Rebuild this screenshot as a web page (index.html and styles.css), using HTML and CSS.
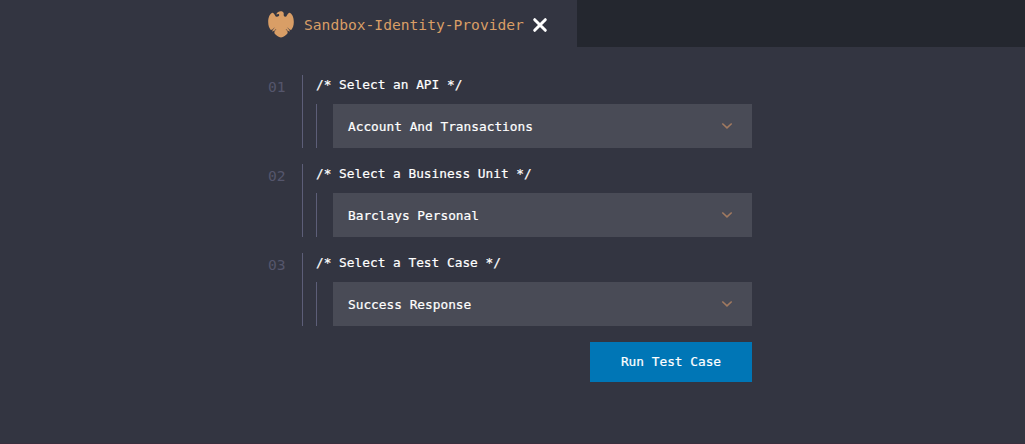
FILE: index.html
```html
<!DOCTYPE html>
<html lang="en">
<head>
<meta charset="utf-8">
<title>Sandbox-Identity-Provider</title>
<link rel="stylesheet" href="styles.css">
</head>
<body>
<header class="tabs">
  <div class="tab">
    <svg class="eagle" width="26" height="27" viewBox="0 0 26 27" aria-hidden="true">
      <path fill="#d99e66" d="M10.2 1C11 .2 12.3 0 13.6.2C15.3.5 16.1 2 15.7 3.6C15.6 5 16.2 6 17.5 5.8C19.2 5.4 19 2.4 21.6 1.7C24.3 2.6 25.8 6.6 25.8 11C25.8 14.5 24.8 17.3 23 19.2L21.5 18L21.6 20.8L19.6 19.6L19.6 22.2C18 24.4 15.5 26 13 26.4C10.5 26 8 24.4 6.4 22.2L6.4 19.6L4.4 20.8L4.5 18L3 19.2C1.2 17.3.2 14.5.2 11C.2 6.6 1.7 2.6 4.4 1.7C7 2.4 6.8 5.4 8.5 5.8C10.3 6 11.6 5 11.1 3.6C10.5 2.9 9.5 3 8.5 3.7C8.5 2.3 9.2 1.5 10.2 1Z"/>
      <path fill="none" stroke="#333440" stroke-width=".5" d="M4 19.5L6.3 16.7M6 20.8L8 18M22 19.5L19.7 16.7M20 20.8L18 18"/>
    </svg>
    <span class="tab-title">Sandbox-Identity-Provider</span>
    <svg class="close" width="16" height="16" viewBox="0 0 16 16" aria-label="Close"><path d="M2.7 2.7L13.3 13.3M13.3 2.7L2.7 13.3"/></svg>
  </div>
</header>
<main class="form">
  <section class="step">
    <span class="number">01</span>
    <div class="step-body">
      <div class="label">/* Select an API */</div>
      <div class="field"><div class="select"><span>Account And Transactions</span><svg class="chevron" width="12" height="8" viewBox="0 0 12 8"><path d="M1.3 1.5L6 5.8L10.7 1.5"/></svg></div></div>
    </div>
  </section>
  <section class="step">
    <span class="number">02</span>
    <div class="step-body">
      <div class="label">/* Select a Business Unit */</div>
      <div class="field"><div class="select"><span>Barclays Personal</span><svg class="chevron" width="12" height="8" viewBox="0 0 12 8"><path d="M1.3 1.5L6 5.8L10.7 1.5"/></svg></div></div>
    </div>
  </section>
  <section class="step">
    <span class="number">03</span>
    <div class="step-body">
      <div class="label">/* Select a Test Case */</div>
      <div class="field"><div class="select"><span>Success Response</span><svg class="chevron" width="12" height="8" viewBox="0 0 12 8"><path d="M1.3 1.5L6 5.8L10.7 1.5"/></svg></div></div>
    </div>
  </section>
  <button class="run" type="button">Run Test Case</button>
</main>
</body>
</html>
```
FILE: styles.css
```css
* { box-sizing: border-box; }
body {
  margin: 0;
  height: 444px;
  overflow: hidden;
  background: #333541;
  border-bottom: 1px solid #382f3e;
  color: #fff;
  font: 12.8px/18px Consolas, "DejaVu Sans Mono", monospace;
}
.tabs { height: 47px; background: #24272f; }
.tab {
  display: flex;
  align-items: flex-start;
  width: 577px;
  height: 47px;
  padding-left: 268px;
  background: #333541;
}
.eagle { margin-top: 11px; }
.tab-title {
  width: 220px;
  margin: 15px 0 0 10px;
  color: #d99e66;
  font-size: 14.62px;
  line-height: 20px;
  white-space: nowrap;
}
.close { margin: 17px 0 0 8px; fill: none; stroke: #fff; stroke-width: 3; stroke-linecap: round; }
.form {
  display: flex;
  flex-direction: column;
  gap: 16px;
  width: 484px;
  margin: 28px 0 0 268px;
}
.step { display: flex; height: 73px; }
.number {
  width: 34px;
  padding-top: 2px;
  color: #55566c;
  font-size: 14.62px;
  line-height: 20px;
}
.step-body { flex: 1; border-left: 1px solid #5d5e78; padding-left: 13px; }
.label { height: 29px; padding-top: 1px; -webkit-text-stroke: .2px #fff; }
.field { height: 44px; border-left: 1px solid #5d5e78; padding-left: 16px; }
.select {
  display: flex;
  align-items: center;
  justify-content: space-between;
  height: 44px;
  padding: 0 19px 0 15px;
  background: #494b56;
}
.select span { padding-top: 2px; -webkit-text-stroke: .2px #fff; }
.chevron { fill: none; stroke: #a17a60; stroke-width: 1.6; }
.run {
  align-self: flex-end;
  width: 162px;
  height: 40px;
  padding: 0;
  border: 0;
  background: #0076b6;
  color: #fff;
  font: inherit;
  -webkit-text-stroke: .2px #fff;
}
```
